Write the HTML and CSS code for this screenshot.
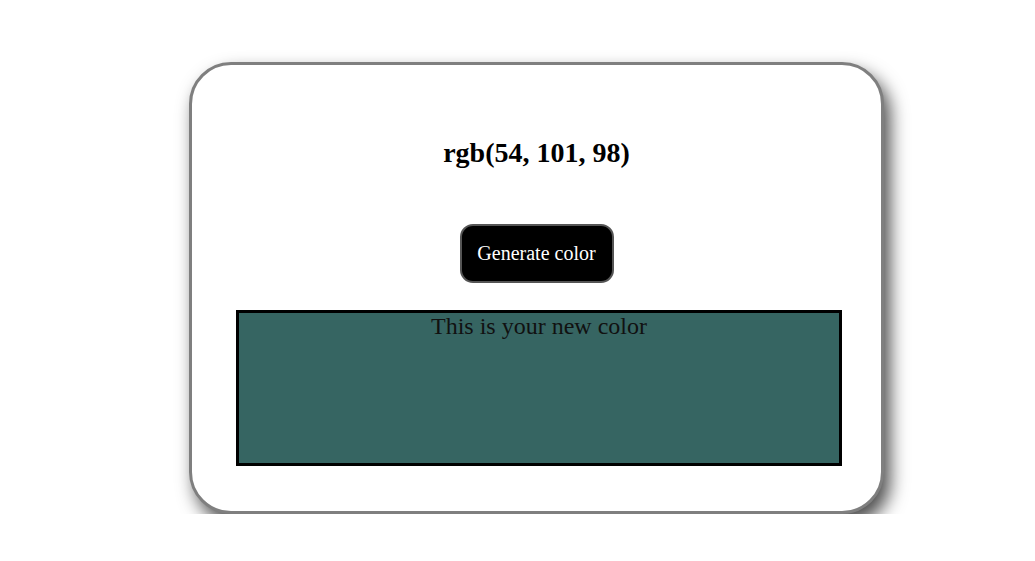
FILE: index.html
```html
<!DOCTYPE html>
<html>
<head>
<meta charset="utf-8">
<link rel="stylesheet" href="styles.css">
</head>
<body>
<div class="card">
  <h2 class="title">rgb(54, 101, 98)</h2>
  <button class="btn">Generate color</button>
  <div class="swatch" style="background: rgb(54, 101, 98);">This is your new color</div>
</div>
</body>
</html>
```
FILE: styles.css
```css
html, body {
  margin: 0;
  padding: 0;
  background: #fff;
}
body {
  font-family: "Liberation Serif", "Times New Roman", serif;
  padding-top: 62px;
  padding-left: 189px;
}
.card {
  box-sizing: border-box;
  width: 695px;
  height: 452px;
  border: 3px solid #7f7f7f;
  border-radius: 42px;
  box-shadow: 6px 10px 18px rgba(0, 0, 0, 0.7);
  display: flex;
  flex-direction: column;
  align-items: center;
  background: #fff;
}
.title {
  margin: 72px 0 0;
  font-size: 28px;
  font-weight: bold;
  line-height: 32px;
  color: #000;
}
.btn {
  margin-top: 55px;
  width: 154px;
  height: 59px;
  background: #000;
  color: #fff;
  border: 2px solid #555;
  border-radius: 13px;
  font-family: "Liberation Serif", "Times New Roman", serif;
  font-size: 20px;
  padding: 0;
}
.swatch {
  box-sizing: border-box;
  align-self: flex-start;
  margin: 27px 0 0 44px;
  width: 606px;
  height: 156px;
  border: 3px solid #000;
  text-align: center;
  font-size: 24px;
  line-height: 26px;
  color: #111;
}
```
